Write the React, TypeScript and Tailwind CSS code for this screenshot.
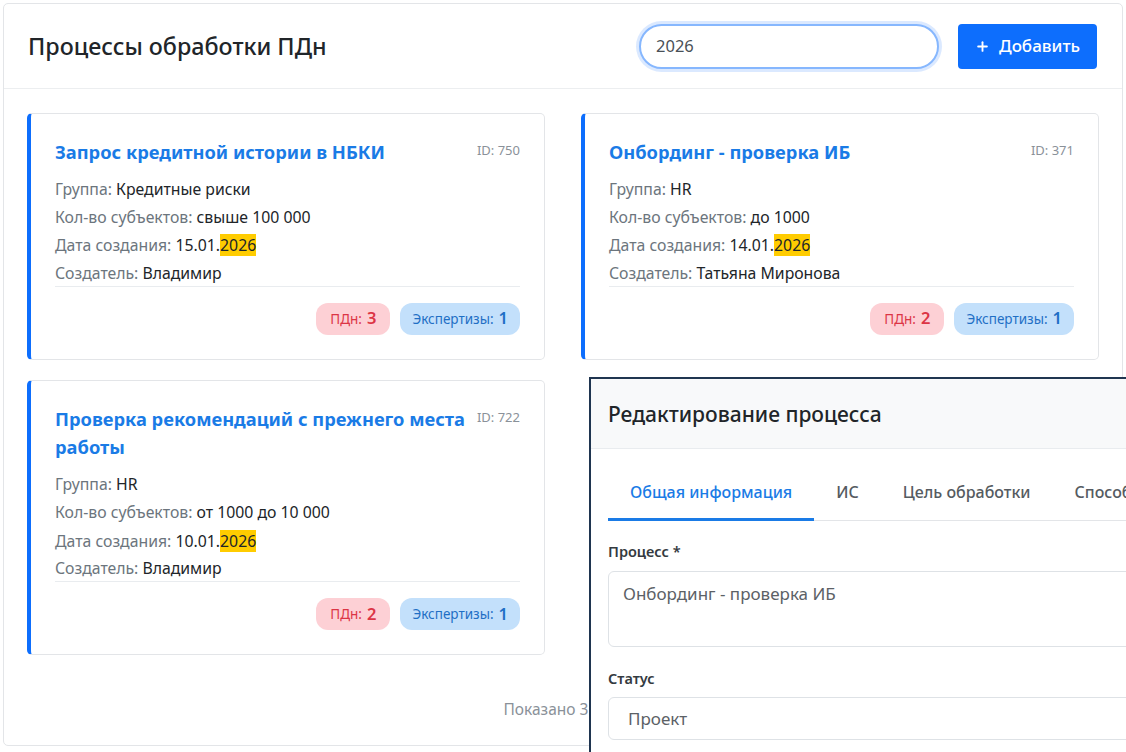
import { Plus } from "lucide-react";

type Proc = {
  id: number;
  title: string;
  group: string;
  subjects: string;
  date: string;
  creator: string;
  pdn: number;
  exp: number;
};

const procs: Proc[] = [
  {
    id: 750,
    title: "Запрос кредитной истории в НБКИ",
    group: "Кредитные риски",
    subjects: "свыше 100 000",
    date: "15.01.",
    creator: "Владимир",
    pdn: 3,
    exp: 1,
  },
  {
    id: 371,
    title: "Онбординг - проверка ИБ",
    group: "HR",
    subjects: "до 1000",
    date: "14.01.",
    creator: "Татьяна Миронова",
    pdn: 2,
    exp: 1,
  },
  {
    id: 722,
    title: "Проверка рекомендаций с прежнего места работы",
    group: "HR",
    subjects: "от 1000 до 10 000",
    date: "10.01.",
    creator: "Владимир",
    pdn: 2,
    exp: 1,
  },
];

function Row({ label, children }: { label: string; children: React.ReactNode }) {
  return (
    <div className="leading-[28.4px]">
      <span className="text-[#6c757d]">{label}: </span>
      <span className="text-[#212529]">{children}</span>
    </div>
  );
}

function ProcCard({ p }: { p: Proc }) {
  return (
    <div className="rounded-[5px] border border-[#e3e5e8] border-l-[4px] border-l-[#0d6efd] bg-white px-6 pt-6 pb-6">
      <div className="flex items-start justify-between gap-1">
        <h3 className="text-[18.3px] font-bold leading-[28.5px] text-[#1a7be6]">{p.title}</h3>
        <span className="mt-[3px] shrink-0 text-[13px] leading-[18px] text-[#8a9199]">ID: {p.id}</span>
      </div>
      <div className="mt-2 border-b border-[#e9ecef] text-[15.8px]">
        <Row label="Группа">{p.group}</Row>
        <Row label="Кол-во субъектов">{p.subjects}</Row>
        <Row label="Дата создания">
          {p.date}
          <mark className="bg-[#ffcc00] text-[#212529]">2026</mark>
        </Row>
        <div className="leading-[26px]">
          <span className="text-[#6c757d]">Создатель: </span>
          <span className="text-[#212529]">{p.creator}</span>
        </div>
      </div>
      <div className="mt-4 flex justify-end gap-[10px]">
        <span className="flex h-8 items-center gap-[5px] rounded-[12px] bg-[#fdd0d5] px-[14px] text-[#dc3545]">
          <span className="text-[13.5px]">ПДн:</span>
          <span className="text-[16.5px] font-semibold">{p.pdn}</span>
        </span>
        <span className="flex h-8 items-center gap-[5px] rounded-[12px] bg-[#c3e0fb] px-[12px] text-[#1f6fc5]">
          <span className="text-[13.5px]">Экспертизы:</span>
          <span className="text-[16.5px] font-semibold">{p.exp}</span>
        </span>
      </div>
    </div>
  );
}

export default function App() {
  return (
    <div
      className="relative h-[752px] w-[1126px] overflow-hidden bg-white p-[3px]"
      style={{ fontFamily: '"Noto Sans", "Open Sans", sans-serif' }}
    >
      <div className="w-[1120px] rounded-[5px] border border-[#e3e5e8] bg-white">
        <div className="flex h-[85px] items-center justify-between border-b border-[#eceef0] pl-[24px] pr-[25px]">
          <h1 className="text-[23.3px] font-medium text-[#212529]">Процессы обработки ПДн</h1>
          <div className="flex items-center gap-[19px]">
            <div className="flex h-[45px] w-[300px] items-center rounded-full border-2 border-[#86b7fe] bg-white px-[15px] text-[16.5px] text-[#495057] shadow-[0_0_0_3px_rgba(13,110,253,0.15)]">
              2026
            </div>
            <button className="flex h-[45px] w-[139px] items-center justify-center gap-[9px] rounded-[4px] bg-[#0d6efd] text-[17px] font-medium text-white">
              <Plus size={15} strokeWidth={3} />
              Добавить
            </button>
          </div>
        </div>
        <div className="px-[23px] pt-6">
          <div className="grid grid-cols-2 items-start gap-x-[36px] gap-y-[20px]">
            {procs.map((p) => (
              <ProcCard key={p.id} p={p} />
            ))}
          </div>
          <p className="mt-[43px] pb-[25px] text-center text-[15.5px] leading-[22px] text-[#8a9199]">
            Показано 3 из 3
          </p>
        </div>
      </div>

      {/* edit dialog, cut off by window */}
      <div className="absolute left-[589px] top-[377px] h-[400px] w-[600px] border-l-2 border-t-2 border-[#1f3550] bg-white">
        <div className="flex h-[70px] items-center border-b border-[#e9ecef] bg-[#f8f9fa] px-[17px] pt-[2px]">
          <h2 className="whitespace-nowrap text-[21px] font-medium text-[#212529]">Редактирование процесса</h2>
        </div>
        <div className="px-[17px] pt-[18px]">
          <div className="flex whitespace-nowrap border-b border-[#e3e5e8] text-[16px] font-medium leading-[24px]">
            <span className="-mb-px shrink-0 border-b-[3px] border-[#1a7be6] px-[22px] pb-[14px] pt-[13px] text-[#1a7be6]">
              Общая информация
            </span>
            <span className="shrink-0 px-[22px] pb-[14px] pt-[13px] text-[#555b61]">ИС</span>
            <span className="shrink-0 px-[22px] pb-[14px] pt-[13px] text-[#555b61]">Цель обработки</span>
            <span className="shrink-0 px-[22px] pb-[14px] pt-[13px] text-[#555b61]">Способ обработки</span>
          </div>
          <label className="mt-[20px] block text-[14.5px] font-semibold leading-[20px] text-[#343a40]">Процесс *</label>
          <div className="mt-[10px] h-[76px] rounded-[6px] border border-[#dee2e6] px-[14px] pt-[9px] text-[17px] text-[#5c6166]">
            Онбординг - проверка ИБ
          </div>
          <label className="mt-[21px] block text-[14.5px] font-semibold leading-[20px] text-[#343a40]">Статус</label>
          <div className="mt-[9px] flex h-[43px] items-center rounded-[6px] border border-[#dee2e6] px-[19px] text-[17px] text-[#5c6166]">
            Проект
          </div>
        </div>
      </div>
    </div>
  );
}
